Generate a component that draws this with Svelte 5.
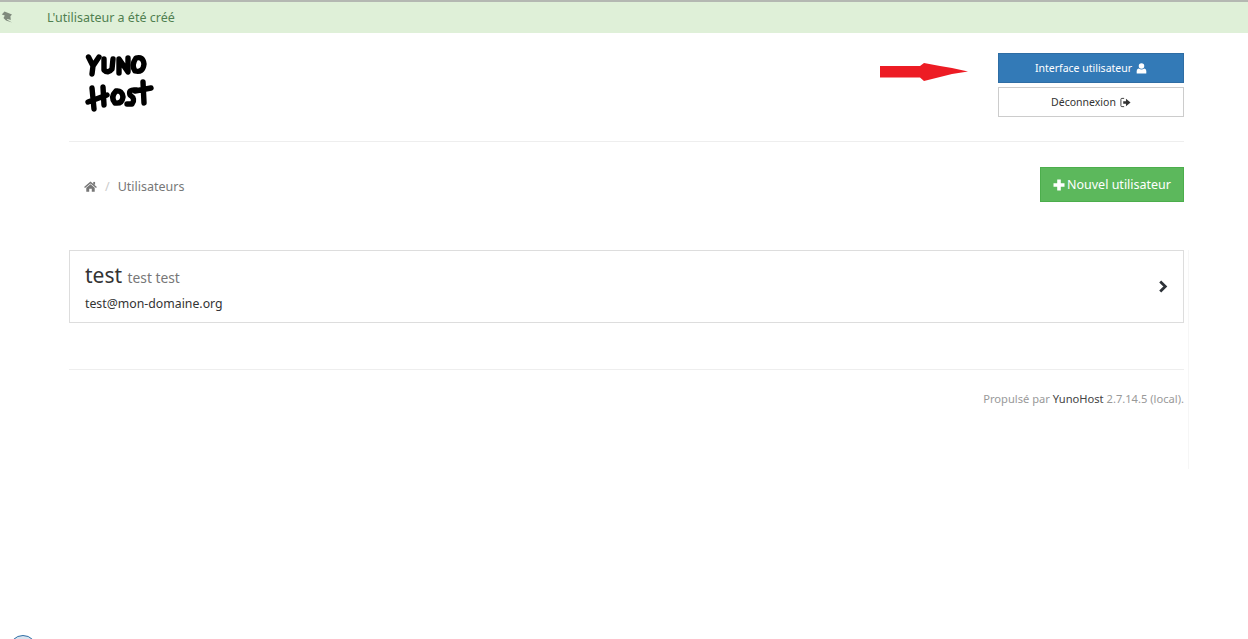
<script>
	let users = [{ name: 'test', full: 'test test', mail: 'test@mon-domaine.org' }];
</script>

<div class="alert">
	<svg class="pin" viewBox="0 0 12 12" width="12" height="12"><path d="M3.5 0.5 L11 3.5 L9.4 5.2 L9.8 9 L6.6 8 L5.8 8.6 L11 11.6 L5 9.6 L2.5 7 L3.8 4.6 L0.8 3.4 Z" fill="#7f8a7c" /></svg>
	<span>L'utilisateur a été créé</span>
</div>

<div class="page">
	<header>
		<svg class="logo" viewBox="0 0 70 62" width="70" height="62" aria-label="YunoHost">
			<g fill="none" stroke="#000" stroke-width="5.4" stroke-linecap="round" stroke-linejoin="round">
				<path d="M3.5 4 L8 13 L14 4 M8 13 L7 21" />
				<path d="M19 6 L19 17 Q23 21 27 16 L28 6" />
				<path d="M34 20 L34 6 L43 19 L43 5" />
				<path d="M51 5 Q46 12 50 18 Q58 20 59 11 Q58 3 51 5 Z" />
				<path d="M7 35 L9 56 M18 34 L19 52 M3 49 L22 42" />
				<path d="M31 38 Q25 44 30 50 Q37 51 38 44 Q37 37 31 38 Z" />
				<path d="M51 37 Q43 36 45 42 Q51 46 47 51 L42 51" />
				<path d="M50 38 L66 35 M58 29 L59 50" />
			</g>
		</svg>
		<div class="actions">
			<a class="btn blue" href="#a">Interface utilisateur
				<svg viewBox="0 0 12 12" width="11" height="11"><circle cx="6" cy="3.2" r="3" fill="#fff" /><path d="M0.8 11.5 Q0.2 6.2 3 6 Q6 8 9 6 Q11.8 6.2 11.2 11.5 Z" fill="#fff" /></svg>
			</a>
			<a class="btn plain" href="#b">Déconnexion
				<svg viewBox="0 0 12 12" width="11" height="11"><path d="M4.5 1.5 H2 Q1 1.5 1 2.5 V9.5 Q1 10.5 2 10.5 H4.5" fill="none" stroke="#333" stroke-width="1" /><path d="M3.5 4.6 H6.5 V2 L11.5 6 L6.5 10 V7.4 H3.5 Z" fill="#333" /></svg>
			</a>
		</div>
	</header>

	<div class="crumbs">
		<nav>
			<svg viewBox="0 0 14 12" width="13" height="11"><path d="M7 0.5 L14 6.6 L13 7.6 L7 2.6 L1 7.6 L0 6.6 Z" fill="#777" /><path d="M2.4 7.4 L7 3.6 L11.6 7.4 V11.6 H8.4 V8.4 H5.6 V11.6 H2.4 Z" fill="#777" /><rect x="10" y="1" width="2" height="3" fill="#777" /></svg>
			<i>/</i>
			<span>Utilisateurs</span>
		</nav>
		<a class="btn green" href="#c">
			<svg viewBox="0 0 12 12" width="12" height="12"><path d="M4.2 0.5 H7.8 V4.2 H11.5 V7.8 H7.8 V11.5 H4.2 V7.8 H0.5 V4.2 H4.2 Z" fill="#fff" /></svg>
			Nouvel utilisateur
		</a>
	</div>

	<section>
		{#each users as u}
			<a class="user" href="#d">
				<div>
					<h2>{u.name} <small>{u.full}</small></h2>
					<p>{u.mail}</p>
				</div>
				<svg viewBox="0 0 10 14" width="10" height="13"><path d="M2 1.5 L7.5 7 L2 12.5" fill="none" stroke="#2d3238" stroke-width="3" /></svg>
			</a>
		{/each}

		<footer>
			Propulsé par <a href="#e">YunoHost</a> 2.7.14.5 (local).
		</footer>
	</section>
</div>

<svg class="arrow" viewBox="0 0 88 18" width="88" height="18"><path d="M0 3 H40 L44 0 L60 3 L72 5 L88 8.5 L72 11 L60 14 L44 18 L40 14.5 H0 Z" fill="#ed1c24" /></svg>
<div class="corner"></div>

<style>
	:global(body) {
		margin: 0;
		background: #fff;
		font-family: 'Noto Sans', 'Open Sans', sans-serif;
		color: #333;
		overflow: hidden;
	}
	.alert {
		display: flex;
		align-items: center;
		height: 31px;
		border-top: 2px solid #b4b8b2;
		background: #dff0d8;
		color: #4f7f50;
		font-size: 12.5px;
		position: relative;
		padding-left: 47px;
	}
	.pin {
		position: absolute;
		left: 1px;
		top: 9px;
	}
	.page {
		margin-left: 69px;
		width: 1115px;
	}
	header {
		display: flex;
		justify-content: space-between;
		height: 108px;
		border-bottom: 1px solid #eee;
	}
	.logo {
		margin: 20px 0 0 16px;
	}
	.actions {
		display: flex;
		flex-direction: column;
		gap: 4px;
		width: 186px;
		padding-top: 20px;
	}
	.btn {
		display: flex;
		align-items: center;
		justify-content: center;
		gap: 4px;
		text-decoration: none;
		box-sizing: border-box;
		font-size: 10.5px;
		height: 30px;
		border: 1px solid transparent;
	}
	.blue {
		background: #337ab7;
		border-color: #2e6da4;
		color: #fff;
	}
	.plain {
		background: #fff;
		border-color: #ccc;
		color: #333;
	}
	.crumbs {
		display: flex;
		justify-content: space-between;
		align-items: flex-start;
		padding: 25px 0 0 15px;
		height: 108px;
		box-sizing: border-box;
	}
	nav {
		display: flex;
		align-items: center;
		font-size: 12.5px;
		color: #777;
		padding-top: 11px;
	}
	nav i {
		font-style: normal;
		color: #ccc;
		margin: 0 8px;
	}
	.green {
		background: #5cb85c;
		border-color: #4cae4c;
		color: #fff;
		width: 144px;
		height: 35px;
		font-size: 12.5px;
		gap: 2px;
	}
	section {
		width: 1120px;
		height: 219px;
		border-right: 1px solid #f6f6f6;
		box-sizing: border-box;
		padding-right: 4px;
	}
	.user {
		display: flex;
		justify-content: space-between;
		align-items: center;
		box-sizing: border-box;
		height: 73px;
		padding: 0 15px;
		border: 1px solid #ddd;
		color: #333;
		text-decoration: none;
	}
	h2 {
		margin: 1px 0 0;
		font-size: 21px;
		font-weight: 400;
		line-height: 26px;
	}
	small {
		font-size: 13.8px;
		color: #777;
	}
	p {
		margin: 4px 0 0;
		font-size: 12.3px;
		line-height: 17px;
	}
	footer {
		margin-top: 46px;
		border-top: 1px solid #eee;
		padding-top: 21px;
		text-align: right;
		font-size: 11.15px;
		line-height: 16px;
		color: #999;
	}
	footer a {
		color: #444;
		text-decoration: none;
	}
	.arrow {
		position: absolute;
		left: 880px;
		top: 63px;
	}
	.corner {
		position: absolute;
		left: 9px;
		top: 635px;
		width: 28px;
		height: 28px;
		box-sizing: border-box;
		border: 1px solid #2f6ea5;
		border-radius: 50%;
		background: #d7e3ee;
		clip-path: inset(0 0 24px 0);
	}
</style>
